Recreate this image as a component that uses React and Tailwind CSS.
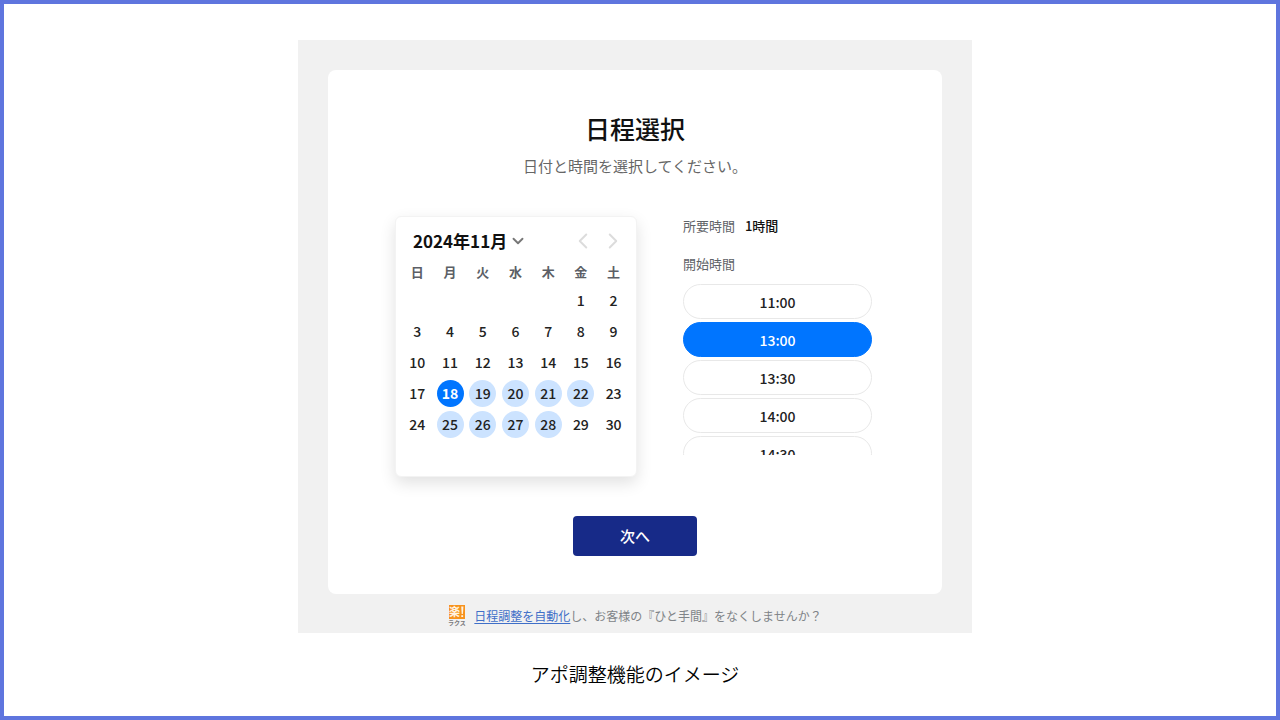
import React, { useState } from 'react';
import { ChevronDown, ChevronLeft, ChevronRight } from 'lucide-react';

const weekdays = ['日', '月', '火', '水', '木', '金', '土'];

const weeks = [
  [null, null, null, null, null, 1, 2],
  [3, 4, 5, 6, 7, 8, 9],
  [10, 11, 12, 13, 14, 15, 16],
  [17, 18, 19, 20, 21, 22, 23],
  [24, 25, 26, 27, 28, 29, 30],
];

// Days that still have free slots
const openDays = [18, 19, 20, 21, 22, 25, 26, 27, 28];

const times = ['11:00', '13:00', '13:30', '14:00', '14:30'];

const dayClass = (day, selected) => {
  if (day === selected) return 'bg-[#0075ff] text-white font-bold';
  if (openDays.includes(day)) return 'bg-[#cce3ff] text-[#222] font-medium';
  return 'text-[#222] font-medium';
};

const Calendar = ({ selected, onSelect }) => (
  <div className="w-[242px] h-[261px] rounded-md bg-white pl-[5px] pr-[6px] pt-[11px] border border-[#f3f3f3] shadow-[0_6px_16px_rgba(0,0,0,0.12)]">
    <div className="flex items-center justify-between h-[26px] pl-3 pr-1">
      <div className="relative flex items-center">
        <select
          aria-label="表示する月"
          className="appearance-none bg-transparent text-[17px] leading-[26px] font-bold text-[#111] pr-[19px]"
        >
          <option>2024年11月</option>
        </select>
        <ChevronDown className="absolute right-0 size-[18px] text-[#777] pointer-events-none" strokeWidth={2.5} />
      </div>
      <div className="flex gap-1 text-[#dcdcdc]">
        <button aria-label="前の月">
          <ChevronLeft size={26} strokeWidth={1.8} />
        </button>
        <button aria-label="次の月">
          <ChevronRight size={26} strokeWidth={1.8} />
        </button>
      </div>
    </div>

    <table className="w-full table-fixed text-center">
      <thead>
        <tr className="h-[31px] text-[13px] text-[#5c5f66]">
          {weekdays.map((name) => (
            <th key={name} className="p-0 pt-1 font-bold">{name}</th>
          ))}
        </tr>
      </thead>
      <tbody>
        {weeks.map((week, i) => (
          <tr key={i} className="h-[31px]">
            {week.map((day, j) => (
              <td key={j} className="p-0">
                {day && (
                  <button
                    onClick={() => onSelect(day)}
                    className={`block mx-auto size-[27px] rounded-full text-[14px] leading-[27px] ${dayClass(day, selected)}`}
                  >
                    {day}
                  </button>
                )}
              </td>
            ))}
          </tr>
        ))}
      </tbody>
    </table>
  </div>
);

const TimeList = ({ selected, onSelect }) => (
  <div className="w-[189px] text-[#5f6368] text-[13px] leading-5">
    <p>
      所要時間 <span className="ml-[7px] font-medium text-[#111]">1時間</span>
    </p>
    <p className="mt-[18px]">開始時間</p>
    <div className="mt-[10px] h-[171px] overflow-y-auto [scrollbar-width:none] flex flex-col gap-[3px]">
      {times.map((time) => (
        <button
          key={time}
          onClick={() => onSelect(time)}
          className={`shrink-0 h-[35px] rounded-full border text-[14px] font-medium ${
            time === selected
              ? 'bg-[#0075ff] border-[#0075ff] text-white'
              : 'bg-white border-[#e8e8e8] text-[#222]'
          }`}
        >
          {time}
        </button>
      ))}
    </div>
  </div>
);

const Logo = () => (
  <svg width="18" height="22" viewBox="0 0 18 22" className="overflow-visible" aria-hidden="true">
    <rect x="1" y="0" width="16" height="14" fill="#f7931e" />
    <text x="1" y="11" fontSize="11" fontWeight="700" fill="#fff3e2">楽</text>
    <path d="M13.200 1.500h2.200l-.5 7.500h-1.200z" fill="#fff3e2" />
    <rect x="13.300" y="10.200" width="1.800" height="1.800" fill="#fff3e2" />
    <text x="0" y="20" fontSize="6" fontWeight="700" fill="#77777a">ラクス</text>
  </svg>
);

const App = () => {
  const [day, setDay] = useState(18);
  const [time, setTime] = useState('13:00');

  return (
    <div className="min-h-screen border-4 border-[#5f75de] bg-white pt-9 pr-[10px] font-['Noto_Sans_CJK_JP',sans-serif]">
      <main className="max-w-[674px] mx-auto bg-[#f1f1f1] px-[30px] pt-[30px]">
        <div className="bg-white rounded-lg pt-10 pb-[38px]">
          <h1 className="text-center text-[25px] leading-9 font-medium text-[#111]">日程選択</h1>
          <p className="mt-2 text-center text-[15px] leading-6 text-[#666]">
            日付と時間を選択してください。
          </p>

          <div className="mt-[38px] pl-[67px] flex gap-[46px]">
            <Calendar selected={day} onSelect={setDay} />
            <TimeList selected={time} onSelect={setTime} />
          </div>

          <button className="block mt-[39px] mx-auto w-[124px] h-10 rounded bg-[#172a88] text-[15px] font-medium text-white">
            次へ
          </button>
        </div>

        {/* Promo line under the card */}
        <footer className="flex items-center justify-center gap-2 h-[39px] pt-1 text-[12px] text-[#808488]">
          <Logo />
          <p>
            <a href="#" className="text-[#3f6fc8] underline underline-offset-2">日程調整を自動化</a>
            し、お客様の『ひと手間』をなくしませんか？
          </p>
        </footer>
      </main>

      <p className="mt-[27px] text-center text-[19px] leading-7 font-[350] text-black">アポ調整機能のイメージ</p>
    </div>
  );
};

export default App;
